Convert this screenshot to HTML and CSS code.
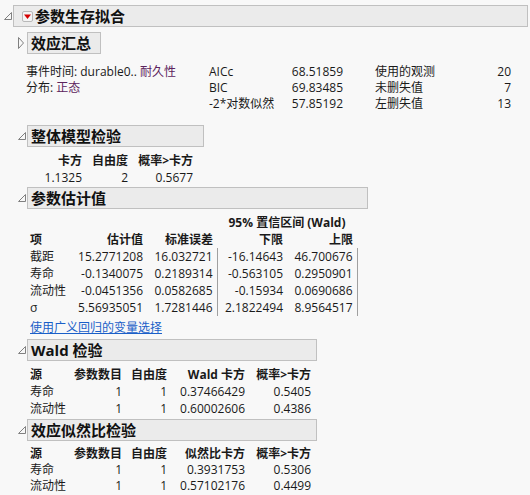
FILE: index.html
```html
<!DOCTYPE html>
<html lang="zh">
<head>
<meta charset="utf-8">
<title>参数生存拟合</title>
<link rel="stylesheet" href="styles.css">
</head>
<body>
<div class="report">
  <div class="ohead top">
    <svg class="tri-open" width="10" height="10" viewBox="0 0 10 10"><path d="M8.5 1.5 L8.5 8.5 L1.5 8.5 Z" fill="none" stroke="#808080" stroke-width="1"/></svg>
    <div class="hbox hbox-top">
      <span class="menu-icon"><svg width="9" height="9" viewBox="0 0 9 9"><path d="M1 2.5 L8 2.5 L4.5 7 Z" fill="#d40000"/></svg></span>
      <span class="htitle">参数生存拟合</span>
    </div>
  </div>

  <div class="ohead sub sec-sum">
    <svg class="tri-closed" width="8" height="14" viewBox="0 0 8 14"><path d="M1.5 1.5 L6.5 7 L1.5 12.5 Z" fill="none" stroke="#808080" stroke-width="1"/></svg>
    <div class="hbox w-sum"><span class="htitle">效应汇总</span></div>
  </div>
  <div class="summary">
    <div class="s-info">事件时间: durable0.. <span class="pur">耐久性</span></div>
    <div>AICc</div><div class="r">68.51859</div><div></div><div>使用的观测</div><div class="r">20</div>
    <div class="s-info">分布: <span class="pur">正态</span></div>
    <div>BIC</div><div class="r">69.83485</div><div></div><div>未删失值</div><div class="r">7</div>
    <div class="s-info"></div>
    <div>-2*对数似然</div><div class="r">57.85192</div><div></div><div>左删失值</div><div class="r">13</div>
  </div>

  <div class="ohead sub sec-whole">
    <svg class="tri-open" width="10" height="10" viewBox="0 0 10 10"><path d="M8.5 1.5 L8.5 8.5 L1.5 8.5 Z" fill="none" stroke="#808080" stroke-width="1"/></svg>
    <div class="hbox w-whole"><span class="htitle">整体模型检验</span></div>
  </div>
  <table class="tbl t-whole">
    <tr class="th"><td class="c1">卡方</td><td class="c2">自由度</td><td class="c3">概率&gt;卡方</td></tr>
    <tr><td>1.1325</td><td>2</td><td>0.5677</td></tr>
  </table>

  <div class="ohead sub sec-est">
    <svg class="tri-open" width="10" height="10" viewBox="0 0 10 10"><path d="M8.5 1.5 L8.5 8.5 L1.5 8.5 Z" fill="none" stroke="#808080" stroke-width="1"/></svg>
    <div class="hbox w-est"><span class="htitle">参数估计值</span></div>
  </div>
  <table class="tbl t-est">
    <tr class="th"><td class="c1"></td><td class="c2"></td><td class="c3"></td><td class="ci" colspan="2">95% 置信区间 (Wald)</td></tr>
    <tr class="th"><td class="l">项</td><td>估计值</td><td>标准误差</td><td>下限</td><td>上限</td></tr>
    <tr><td class="l">截距</td><td>15.2771208</td><td class="sep">16.032721</td><td>-16.14643</td><td class="sep">46.700676</td></tr>
    <tr><td class="l">寿命</td><td>-0.1340075</td><td class="sep">0.2189314</td><td>-0.563105</td><td class="sep">0.2950901</td></tr>
    <tr><td class="l">流动性</td><td>-0.0451356</td><td class="sep">0.0582685</td><td>-0.15934</td><td class="sep">0.0690686</td></tr>
    <tr><td class="l">σ</td><td>5.56935051</td><td class="sep">1.7281446</td><td>2.1822494</td><td class="sep">8.9564517</td></tr>
  </table>
  <div class="link-row"><a class="link" href="#">使用广义回归的变量选择</a></div>

  <div class="ohead sub sec-wald">
    <svg class="tri-open" width="10" height="10" viewBox="0 0 10 10"><path d="M8.5 1.5 L8.5 8.5 L1.5 8.5 Z" fill="none" stroke="#808080" stroke-width="1"/></svg>
    <div class="hbox w-wald"><span class="htitle">Wald 检验</span></div>
  </div>
  <table class="tbl t-test">
    <tr class="th"><td class="l c1">源</td><td class="c2">参数数目</td><td class="c3">自由度</td><td class="c4">Wald 卡方</td><td class="c5">概率&gt;卡方</td></tr>
    <tr><td class="l">寿命</td><td>1</td><td>1</td><td>0.37466429</td><td>0.5405</td></tr>
    <tr><td class="l">流动性</td><td>1</td><td>1</td><td>0.60002606</td><td>0.4386</td></tr>
  </table>

  <div class="ohead sub sec-lr">
    <svg class="tri-open" width="10" height="10" viewBox="0 0 10 10"><path d="M8.5 1.5 L8.5 8.5 L1.5 8.5 Z" fill="none" stroke="#808080" stroke-width="1"/></svg>
    <div class="hbox w-wald"><span class="htitle">效应似然比检验</span></div>
  </div>
  <table class="tbl t-test t-lr">
    <tr class="th"><td class="l c1">源</td><td class="c2">参数数目</td><td class="c3">自由度</td><td class="c4">似然比卡方</td><td class="c5">概率&gt;卡方</td></tr>
    <tr><td class="l">寿命</td><td>1</td><td>1</td><td>0.3931753</td><td>0.5306</td></tr>
    <tr><td class="l">流动性</td><td>1</td><td>1</td><td>0.57102176</td><td>0.4499</td></tr>
  </table>
</div>
</body>
</html>
```

FILE: styles.css
```css
html, body {
  margin: 0;
  padding: 0;
  background: #f8f8f8;
}
body {
  font-family: "Open Sans", "Noto Sans CJK SC", sans-serif;
  font-size: 12px;
  color: #1a1a1a;
}
.report {
  width: 530px;
  height: 495px;
  overflow: hidden;
}
.ohead {
  display: flex;
  align-items: center;
}
.ohead.top {
  margin-top: 5px;
  padding-left: 3px;
}
.ohead.sub {
  padding-left: 17px;
}
.tri-open {
  display: block;
  flex: none;
}
.tri-closed {
  display: block;
  flex: none;
  margin-right: 2px;
}
.hbox {
  box-sizing: border-box;
  height: 22px;
  background: #ebebeb;
  border: 1px solid #c0c0c0;
  display: flex;
  align-items: center;
  padding-left: 3px;
}
.hbox-top {
  width: 515px;
  padding-left: 8px;
}
.htitle {
  font-weight: bold;
  font-size: 15px;
  color: #111;
  line-height: 20px;
  white-space: nowrap;
}
.menu-icon {
  display: inline-flex;
  width: 9px;
  height: 9px;
  border: 1px solid #b8b8b8;
  border-radius: 2px;
  background: #f4f4f4;
  margin-right: 2px;
  box-sizing: content-box;
}
.menu-icon svg { display: block; }
.w-sum { width: 74px; }
.w-whole { width: 177px; }
.w-est { width: 341px; }
.w-wald { width: 290px; }

.sec-sum { margin-top: 5px; }
.summary {
  display: grid;
  grid-template-columns: 183px 61px 73px 32px 70px 66px;
  grid-auto-rows: 16px;
  line-height: 16px;
  padding-left: 26px;
  margin-top: 10px;
  white-space: nowrap;
}
.summary .r { text-align: right; }
.pur { color: #5c235c; }

.sec-whole { margin-top: 13px; }
.sec-est { margin-top: 1px; }
.sec-wald { margin-top: 3px; }
.sec-lr { margin-top: 2px; }

.tbl {
  border-collapse: collapse;
  border-spacing: 0;
  white-space: nowrap;
}
.tbl td {
  padding: 0 4px 0 0;
  height: 17px;
  line-height: 17px;
  text-align: right;
  vertical-align: middle;
}
.tbl td.l {
  text-align: left;
}
.tbl .th td {
  font-weight: bold;
}
.t-whole {
  margin-left: 44px;
  margin-top: 5px;
}
.t-whole .c1 { width: 38px; }
.t-whole .c2 { width: 42px; }
.t-whole .c3 { width: 61px; }

.t-est {
  margin-left: 30px;
  margin-top: 5px;
}
.t-est .c1 { width: 42px; }
.t-est .c2 { width: 67px; }
.t-est .c3 { width: 66px; }
.t-est td.ci { text-align: center; padding-right: 0; width: 140px; }
.t-est td.sep { border-right: 1px solid #a0a0a0; }

.link-row {
  padding-left: 30px;
  height: 16px;
  line-height: 16px;
  margin-top: 4px;
}
.link {
  color: #1a5fc8;
  text-decoration: underline;
}

.t-test {
  margin-left: 30px;
  margin-top: 5px;
}
.t-lr td {
  height: 16px;
  line-height: 16px;
}
.t-test .c1 { width: 40px; }
.t-test .c2 { width: 48px; }
.t-test .c3 { width: 41px; }
.t-test .c4 { width: 74px; }
.t-test .c5 { width: 62px; }
```
